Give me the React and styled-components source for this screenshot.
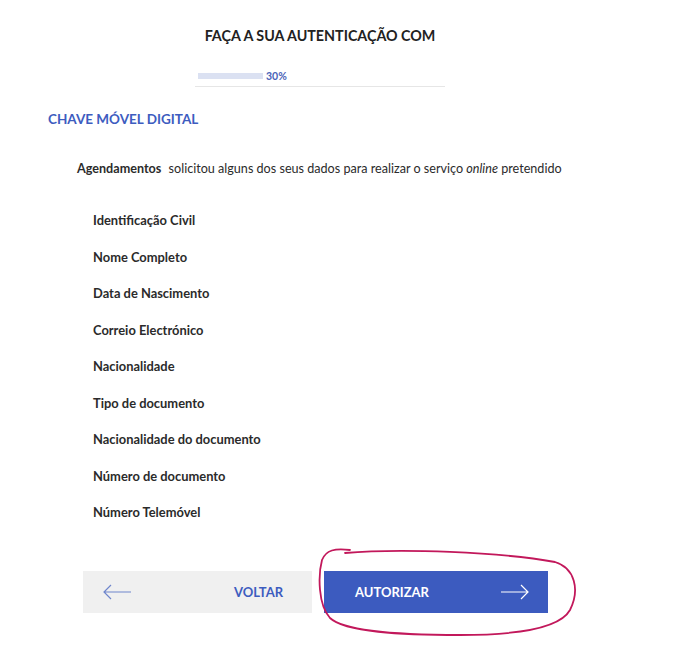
import React from 'react'
import styled, { createGlobalStyle } from 'styled-components'

const GlobalStyle = createGlobalStyle`
  body {
    margin: 0;
    background: #fff;
    font-family: Lato, "Open Sans", sans-serif;
    color: #2b2b2b;
  }
`

const Page = styled.div`
  width: 640px;
  padding-top: 27px;
  padding-bottom: 40px;
`

const Title = styled.h1`
  margin: 0;
  text-align: center;
  font-size: 14.3px;
  line-height: 17px;
  font-weight: 700;
  color: #222;
`

const Progress = styled.div`
  width: 250px;
  margin: 26px auto 0;
  padding: 0 0 4px 3px;
  box-sizing: border-box;
  border-bottom: 1px solid #e6e6e6;
  display: flex;
  align-items: flex-end;
  gap: 3px;
`

const Track = styled.div`
  width: 65px;
  height: 6px;
  margin-bottom: 3px;
  background: #dbe1f2;
`

const Percent = styled.span`
  font-size: 10.5px;
  line-height: 12px;
  font-weight: 700;
  color: #4a63b8;
`

const SectionHeading = styled.h2`
  margin: 24px 0 0 48px;
  font-size: 13.5px;
  line-height: 17px;
  font-weight: 700;
  color: #3d5cbf;
`

const Intro = styled.p`
  margin: 33px 0 0 77px;
  font-size: 12.6px;
  line-height: 15px;
  color: #2b2b2b;

  strong {
    font-weight: 700;
    margin-right: 4px;
  }
`

const FieldList = styled.ul`
  list-style: none;
  margin: 37px 0 0 93px;
  padding: 0;
`

const Field = styled.li`
  font-size: 12.9px;
  line-height: 15px;
  height: 36.5px;
  font-weight: 700;
  color: #2b2b2b;
`

const Actions = styled.div`
  display: flex;
  gap: 12px;
  margin: 29px 0 0 83px;
`

const PrimaryWrap = styled.div`
  position: relative;
`

const Button = styled.button`
  height: 42px;
  width: ${p => p.$width}px;
  border: none;
  display: flex;
  align-items: center;
  justify-content: ${p => (p.$primary ? 'space-between' : 'flex-start')};
  padding: ${p => (p.$primary ? '0 19px 0 31px' : '0 0 0 20px')};
  background: ${p => (p.$primary ? '#3c5bbf' : '#f0f0f0')};
  color: ${p => (p.$primary ? '#fff' : '#3d5cbf')};
  font-family: Lato, sans-serif;
  font-size: 13px;
  font-weight: 700;
  cursor: pointer;
`

const Label = styled.span`
  margin-left: ${p => p.$offset || 0}px;
`

const Scribble = styled.svg`
  position: absolute;
  left: -10px;
  top: -25px;
  overflow: visible;
  pointer-events: none;
`

const Arrow = ({ left, color }) => (
  <svg width="29" height="16" viewBox="0 0 29 16" fill="none" stroke={color} strokeWidth="1.2">
    {left ? (
      <path d="M28 8H1M8 1L1 8l7 7" />
    ) : (
      <path d="M1 8h27M21 1l7 7-7 7" />
    )}
  </svg>
)

const fields = [
  'Identificação Civil',
  'Nome Completo',
  'Data de Nascimento',
  'Correio Electrónico',
  'Nacionalidade',
  'Tipo de documento',
  'Nacionalidade do documento',
  'Número de documento',
  'Número Telemóvel',
]

export default function App() {
  return (
    <Page>
      <GlobalStyle />
      <Title>FAÇA A SUA AUTENTICAÇÃO COM</Title>
      <Progress>
        <Track />
        <Percent>30%</Percent>
      </Progress>
      <SectionHeading>CHAVE MÓVEL DIGITAL</SectionHeading>
      <Intro>
        <strong>Agendamentos</strong> solicitou alguns dos seus dados para realizar o serviço{' '}
        <em>online</em> pretendido
      </Intro>
      <FieldList>
        {fields.map(f => (
          <Field key={f}>{f}</Field>
        ))}
      </FieldList>
      <Actions>
        <Button $width={229}>
          <Arrow left color="#6f86cc" />
          <Label $offset={102}>VOLTAR</Label>
        </Button>
        <PrimaryWrap>
          <Button $width={224} $primary>
            <Label>AUTORIZAR</Label>
            <Arrow color="#fff" />
          </Button>
          <Scribble width="270" height="95" viewBox="0 0 270 95" fill="none">
            <path
              d="M31 7C86 2 186 6 241 16C261 22 266 44 256 64C246 82 206 89 146 89C86 89 31 86 16 72C4 59 4 29 8 14C12 4 21 2 36 4"
              stroke="#c2185b"
              strokeWidth="1.8"
              strokeLinecap="round"
            />
          </Scribble>
        </PrimaryWrap>
      </Actions>
    </Page>
  )
}
